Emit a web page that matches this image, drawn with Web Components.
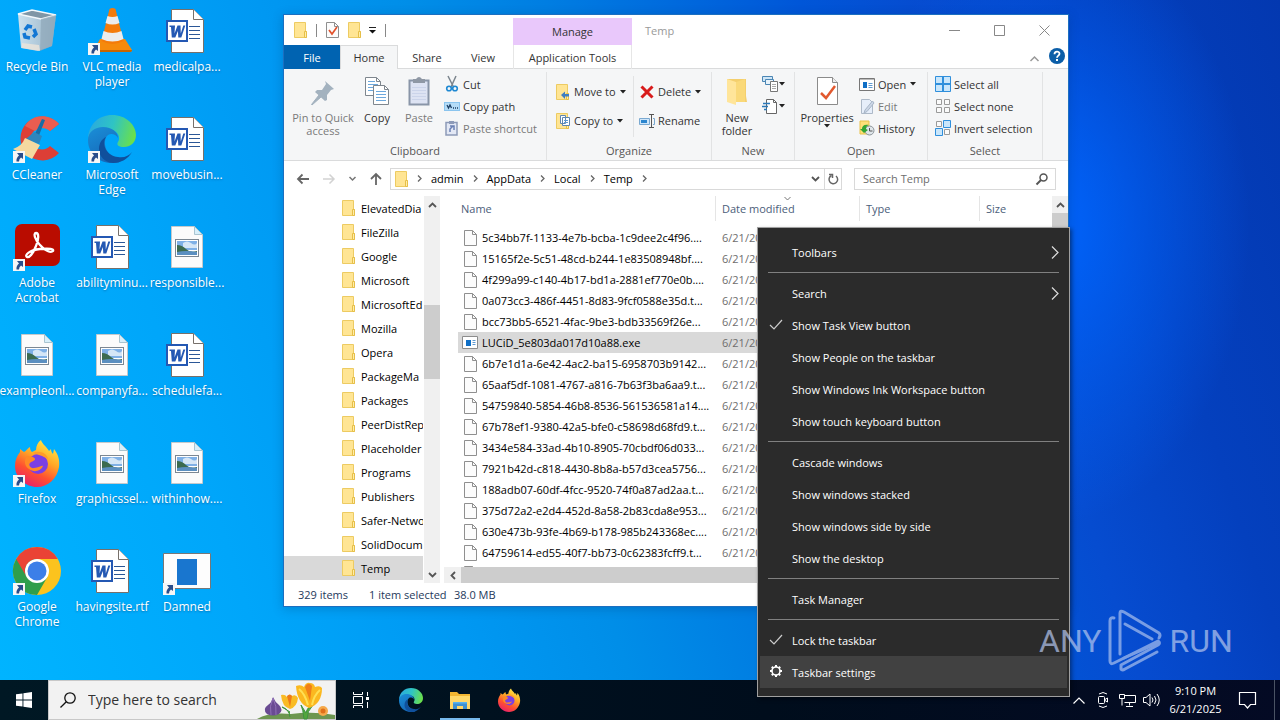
<!DOCTYPE html>
<html lang="en">
<head>
<meta charset="utf-8">
<meta name="viewport" content="width=device-width, initial-scale=1">
<title>Desktop</title>
<style>
  html, body { margin: 0; height: 100%; }
  body { font: 11px/15px "Open Sans", "Noto Sans", sans-serif; color: #000; overflow: hidden; }
</style>
</head>
<body>
<desk-shell></desk-shell>

<script>
const BASE = `
  *, *::before, *::after { box-sizing: border-box; }
  button, input { font: inherit; color: inherit; background: none; border: 0; padding: 0; margin: 0; outline: 0; }
  a { color: inherit; text-decoration: none; }
  button { white-space: nowrap; }
`;

/* Registers an element whose shadow tree comes from a style block and a render function. */
function define(name, css, render) {
  customElements.define(name, class extends HTMLElement {
    connectedCallback() {
      if (this.shadowRoot) return;
      const root = this.attachShadow({ mode: 'open' });
      const tpl = document.createElement('template');
      tpl.innerHTML = `<style>${BASE}${css}</style>${render(this)}`;
      root.append(tpl.content.cloneNode(true));
    }
  });
}

/* ---------- icons: name -> [width, height, markup] ---------- */
const wordDoc = `<path d="M8.500 2.500h22l10 10v33h-32z" fill="#fff" stroke="#77706a"/>
  <path d="M30.500 2.500v10h10" fill="#fff" stroke="#77706a"/>
  <path d="M26 19.500h11M26 23.500h11M26 27.500h11M26 31.500h11" stroke="#2b5797"/>
  <rect x="3" y="13" width="22" height="22" fill="#2458b3"/><rect x="5" y="15" width="18" height="18" fill="#fff"/>
  <path d="M6.500 18.500h5.500l-.5 8 3-8h3l.3 8 2.500-8h2l-4 12h-3l-.4-6.500-2.600 6.500h-3.500l-.8-10.500h-1.500z" fill="#2458b3"/>`;
const picDoc = `<path d="M8.500 3.500h23l8 8v33h-31z" fill="#fbfbfb" stroke="#c4c9cc"/>
  <path d="M31.500 3.500v8h8z" fill="#d8effa" stroke="#a9c4d0"/>
  <rect x="12.500" y="16.500" width="23" height="17" fill="#fff" stroke="#7c8792"/>
  <path d="M14 18h20v9h-20z" fill="#7fb0e6"/><path d="M20 20q4-3 8 0t6 0v5h-14z" fill="#d5e6f6"/>
  <path d="M14 22q5 0 9 4t11 2v4h-20z" fill="#3c6b4f"/><path d="M14 29q9-2 20 0v3h-20z" fill="#5b8fc0"/>`;
const edge = `<defs><linearGradient id="e1" x1="0" y1=".3" x2="1" y2=".5"><stop offset="0" stop-color="#2aa8e0"/><stop offset=".5" stop-color="#2fc4c4"/><stop offset="1" stop-color="#6be04a"/></linearGradient>
  <linearGradient id="e2" x1="0" y1="0" x2=".5" y2="1"><stop offset="0" stop-color="#1a8fd8"/><stop offset="1" stop-color="#1668b8"/></linearGradient></defs>
  <path d="M0 23C1 9 11 0 24 0c14 0 24 10 24 20 0 8-6 12-12 12-5 0-8-2-6-5 3-4 0-12-8-12C12 14 3 18 0 23z" fill="url(#e1)"/>
  <path d="M0 25C0 17 7 12 15 12c9 0 15 5 15 11-2-4-7-5-10-3-5 4-4 15 3 21 3 3 7 5 10 5-2 2-6 2-9 2C10 48 0 38 0 25z" fill="url(#e2)"/>
  <path d="M18 22c-5 8 1 19 12 20 6 1 11-1 14-5-4 7-11 11-19 11C16 47 11 41 11 34c0-6 3-10 7-12z" fill="#10509c"/>`;
const firefox = `<defs><linearGradient id="f1" x1=".8" y1="0" x2=".3" y2="1"><stop offset="0" stop-color="#fff04a"/><stop offset=".4" stop-color="#ffa726"/><stop offset=".7" stop-color="#ff5030"/><stop offset="1" stop-color="#e8206c"/></linearGradient></defs>
  <path d="M28 1c1 4 6 7 8 11l2-2c0 2 1 4 2 5l1-5c4 5 6 11 5 18-2 12-11 20-22 20S2 39 2 27c0-6 2-10 5-14V10l4 3c2-1 4-4 6-5 0 3 1 4 2 5l4-2c0-4 2-8 5-10z" fill="url(#f1)"/>
  <circle cx="25" cy="25" r="10" fill="#7b3fe4"/><path d="M14 17c3 0 8 1 8 3s-3 2-5 4 1 6 4 5c5 0 8-3 9-2-2 5-9 7-14 3-5-3-5-9-2-13z" fill="#ff8a25"/>
  <path d="M20 14c6-3 14 0 15 6l-6-3z" fill="#ff9d28"/>`;
const folder = `<path d="M.5.5h11v9h1v6H.5z" fill="#ffe594" stroke="#edcb62"/><path d="M10.500 9.500h2v6h-2z" fill="#ffedaa" stroke="#e6bf48"/>`;
const caretDown = `<path d="M0 0h6L3 3.500z" fill="#222"/>`;
const page = `<path d="M.5.5h8l4 4v11h-12z" fill="#fcfcfc" stroke="#8f8f8f"/><path d="M8.500.5v4h4" fill="none" stroke="#8f8f8f"/>`;

const ICONS = {
  recycle: [48, 48, `<defs><linearGradient id="r" x1="0" x2="1"><stop offset="0" stop-color="#d6e4ee"/><stop offset="1" stop-color="#9fb4c4"/></linearGradient></defs>
    <path d="M5 7l14-4 24 5-4 31-14 5-17-3z" fill="url(#r)" opacity=".95"/><path d="M5 7l23 5 15-4-24-5z" fill="#7f96a6" stroke="#f2f8fc" stroke-width="1.500"/>
    <path d="M28 12l15-4-4 31-12 5z" fill="#8ea6b8" opacity=".7"/><path d="M9 36l17 2 1 6-18-3z" fill="#eee5da" opacity=".8"/>
    <g fill="none" stroke="#1277d4" stroke-width="3.500"><path d="M12 23l3-4 4 1"/><path d="M21 22l2 5-3 3"/><path d="M17 31l-5-1-1-4"/></g>`],
  vlc: [48, 48, `<path d="M6 43l6-11h25l7 11q0 2-3 2H9q-3 0-3-2z" fill="#f58a0c"/><path d="M6 43h38q0 2-3 2H9q-3 0-3-2z" fill="#c86500"/>
    <path d="M21.500 2q3-2 6 0l8 32q-11 6-22 0z" fill="#f47b0a"/><path d="M19.500 9q5 2 10 0l2 7q-7 3-14 0zM15.500 24q9 4 18 0l2 8q-11 5-22 0z" fill="#ececec"/>`],
  ccleaner: [48, 48, `<path d="M46 9A22 22 0 1 0 46 38L37 31A11 11 0 1 1 37 16z" fill="#dc3f36"/><path d="M46 9C36-2 19-1 12 11l10 5c4-4 10-4 15 0z" fill="#ea5d50"/>
    <path d="M29 4l3 1-7 18-4-2z" fill="#176da6"/><path d="M21 17l8 4-3 8-13-5z" fill="#2e86bd"/><path d="M12 23l15 7-8 14L0 34q9-3 12-11z" fill="#f5d9a0"/>`],
  acrobat: [48, 48, `<rect x="2" y="1" width="45" height="42" rx="7" fill="#b90c00"/>
    <path d="M23 10c3 0 3 6 0 13-3 8-7 12-9 11-3-2 3-7 13-8s14 0 13 2c-2 2-8 0-13-6-5-5-7-12-4-12z" fill="none" stroke="#fff" stroke-width="2.300"/>`],
  chrome: [48, 48, `<circle cx="24" cy="24" r="24" fill="#fcc31e"/>
    <path d="M3.200 12A24 24 0 0 0 24 48l10.400-18L24 24V12z" fill="#2f9e4c"/><path d="M3.200 12A24 24 0 0 1 44.800 12H24A12 12 0 0 0 13.600 30z" fill="#ea4335"/>
    <circle cx="24" cy="24" r="12" fill="#fff"/><circle cx="24" cy="24" r="9.500" fill="#3c7fe8"/>`],
  firefox: [48, 48, firefox], edge: [48, 48, edge], word: [48, 48, wordDoc], picture: [48, 48, picDoc],
  program: [48, 48, `<path d="M.5 6.500h47v35H.5z" fill="#fdfdfd" stroke="#777"/><rect x="14" y="12" width="20" height="26" fill="#1976cf"/>`],
  shortcut: [12, 12, `<path d="M0 0h12v12H0z" fill="#f6f6f6"/><path d="M4 2h6v6L8 6.500Q6 8 6 10.500H3.500Q3 7 6 4.500z" fill="#2a4d8a"/>`],
  folder: [13, 16, folder],
  check: [13, 16, `${page}<path d="M3 8l3 4 5-7" fill="none" stroke="#e2522c" stroke-width="1.700"/>`],
  qat: [7, 7, `<path d="M0 .5h7" stroke="#222"/><path d="M0 3h7L3.500 6.500z" fill="#111"/>`],
  min: [11, 11, `<path d="M0 5.500h11" stroke="#888"/>`],
  max: [11, 11, `<path d="M.5.5h10v10H.5z" fill="none" stroke="#888"/>`],
  close: [11, 11, `<path d="M.5.5l10 10M10.500.5l-10 10" stroke="#888"/>`],
  up: [9, 6, `<path d="M.5 5l4-4 4 4" fill="none" stroke="#999" stroke-width="1.500"/>`],
  upDark: [9, 6, `<path d="M1 5l3.500-3.500L8 5" fill="none" stroke="#555" stroke-width="1.800"/>`],
  downDark: [9, 6, `<path d="M1 1l3.500 3.500L8 1" fill="none" stroke="#555" stroke-width="1.800"/>`],
  downSmall: [7, 5, `<path d="M.5 1l3 3 3-3" fill="none" stroke="#777" stroke-width="1.500"/>`],
  sort: [7, 4, `<path d="M.5 0l3 3 3-3" fill="none" stroke="#777"/>`],
  leftDark: [6, 9, `<path d="M5 1L1.500 4.500 5 8" fill="none" stroke="#555" stroke-width="1.800"/>`],
  crumb: [5, 7, `<path d="M1 .5l3 3-3 3" fill="none" stroke="#666" stroke-width="1.300"/>`],
  back: [12, 10, `<path d="M5.500.5L1 5l4.500 4.500M1 5h11" fill="none" stroke="#666" stroke-width="1.800"/>`],
  forward: [12, 10, `<path d="M6.500.5L11 5 6.500 9.500M11 5H0" fill="none" stroke="#d2d2d2" stroke-width="1.500"/>`],
  upArrow: [12, 12, `<path d="M1 6l5-5 5 5M6 1v11" fill="none" stroke="#666" stroke-width="1.800"/>`],
  refresh: [11, 12, `<path d="M3.500 2.500A4.300 4.300 0 1 0 8 3" fill="none" stroke="#666" stroke-width="1.500"/><path d="M1 1.500h3.500V5" fill="none" stroke="#666" stroke-width="1.500"/>`],
  lens: [12, 12, `<circle cx="7.500" cy="4.500" r="3.500" fill="none" stroke="#555" stroke-width="1.500"/><path d="M5 7L.5 11.500" stroke="#555" stroke-width="2"/>`],
  help: [16, 16, `<circle cx="8" cy="8" r="8" fill="#0b5ea8"/><path d="M5.500 6.200c0-3.400 5-3.400 5-.4 0 1.800-2.500 2-2.500 4" fill="none" stroke="#fff" stroke-width="1.800"/><rect x="7" y="11" width="2" height="2" fill="#fff"/>`],
  caret: [6, 4, caretDown],
  pin: [32, 32, `<path d="M18 5l9 8-3 1-4 5v5l-2 1-10-9 2-2 5 0 4-6z" fill="#a3b2bf"/><path d="M12 19l2 2-9 8-.5-.5z" fill="#a3b2bf" stroke="#a3b2bf"/>`],
  copy: [32, 32, `<g fill="#fff" stroke="#7e868e"><path d="M4.500 1.500h11l4 4v14h-15z"/><path d="M12.500 9.500h11l4 4v15h-15z"/></g><path d="M15.500 1.500v4h4M23.500 9.500v4h4" fill="none" stroke="#7e868e"/>
    <path d="M7 5.500h7M7 8.500h10M7 11.500h5M7 14.500h5M15 15.500h10M15 18.500h10M15 21.500h10M15 24.500h10" stroke="#6da8dd"/>`],
  paste: [32, 32, `<path d="M6.500 4.500h19v24h-19z" fill="#dde3f3" stroke="#8995a8" stroke-width="2"/><path d="M10 3h3q3-4 6 0h3v4H10z" fill="#8f98a5"/><path d="M9 11.500h14M9 14.500h14M9 17.500h14M9 20.500h14M9 23.500h14" stroke="#cbd4ea"/>`],
  cut: [16, 16, `<path d="M4 0l5.500 11M12 0L7 11" stroke="#7b858d" stroke-width="1.500"/><circle cx="5" cy="12.500" r="2.300" fill="none" stroke="#1e88d2" stroke-width="1.600"/><circle cx="11" cy="12.500" r="2.300" fill="none" stroke="#1e88d2" stroke-width="1.600"/>`],
  copyPath: [16, 16, `<rect x=".5" y="4.500" width="15" height="8" fill="#b5dcf7" stroke="#8ac4ee"/><path d="M3 7l1.500 3L6 7l1.500 3" fill="none" stroke="#1c3e63" stroke-width="1.300"/><path d="M9 10h1M11 10h1M13 10h1" stroke="#1c3e63" stroke-width="1.300"/>`],
  pasteLink: [16, 16, `<path d="M2 2.500h11v12.500H2z" fill="#e3e8f5" stroke="#8d9ab8" stroke-width="1.500"/><path d="M5 1h5v3H5z" fill="#8d9ab8"/><path d="M6 12V9l3-3M6 6h4v4" fill="none" stroke="#6b80b4" stroke-width="1.500"/>`],
  moveTo: [14, 16, `${folder}<path d="M13 10H9V7.500L5 11l4 4v-2.500h4z" fill="#3f7ec2"/>`],
  copyTo: [14, 16, `${folder}<path d="M4.500 2.500h5v8h-5zM6.500 4.500h7v8h-7z" fill="#fff" stroke="#5f86b0"/><path d="M8 7.500h4M8 9.500h4" stroke="#5f9ad2"/>`],
  del: [14, 14, `<path d="M1.500 1.500l11 11M12.500 1.500l-11 11" stroke="#d81b1b" stroke-width="3"/>`],
  rename: [16, 16, `<path d="M.5 5.500h10v6H.5z" fill="#cfe6fa" stroke="#7aa9d1"/><path d="M2 7h6v3H2z" fill="#2c86cf"/><path d="M12.500 1v14M10 1.500h5M10 14.500h5" stroke="#555" /><path d="M14 5.500h1.500v6H14" fill="none" stroke="#7aa9d1"/>`],
  newFolder: [32, 32, `<path d="M6 3h19v17l1 6H6z" fill="#f4cf6d"/><path d="M6 3l9 3v23l-9-3z" fill="#ffe59a"/><path d="M15 6l9-3v23h-9z" fill="#fad979"/>`],
  newItem: [24, 16, `<path d="M.5.5h10v5H.5z" fill="#cfe6f7" stroke="#4b86b4"/><path d="M3.500 3.500h8v5h-8z" fill="#e8f3fb" stroke="#4b86b4"/><path d="M8.500 5.500h7v10h-7z" fill="#fff" stroke="#777"/><path d="M10 8.500h4M10 10.500h4M10 12.500h4" stroke="#aaa"/><g transform="translate(17 6)">${caretDown}</g>`],
  easy: [24, 16, `<path d="M4.500 1.500h7l3 3v11h-10z" fill="#fff" stroke="#666"/><path d="M11.500 1.500v3h3" fill="none" stroke="#666"/><path d="M1 5.500h7M0 8.500h6M2 11.500h3" stroke="#2b79b9" stroke-width="1.300"/><g transform="translate(17 6)">${caretDown}</g>`],
  props: [32, 32, `<path d="M6.500 1.500h15l5 5v22h-20z" fill="#fff" stroke="#8b8b8b"/><path d="M21.500 1.500v5h5" fill="#eee" stroke="#8b8b8b"/><path d="M10 17l5 5 9-12" fill="none" stroke="#e2592f" stroke-width="2.500"/>`],
  open: [16, 13, `<path d="M.5.5h15v12H.5z" fill="#fff" stroke="#777"/><path d="M1 1.500h14" stroke="#bbb"/><rect x="4" y="4" width="4" height="6" fill="#0f6fc6"/><path d="M9.500 5.500h4M9.500 7.500h4M9.500 9.500h4" stroke="#5f9ad2"/>`],
  edit: [16, 16, `<path d="M2.500 1.500h8l3 3v11h-11z" fill="#e6eefa" stroke="#adb9c8"/><path d="M13.500 3L6 12l-1 3 3-1.500 7-8.500z" fill="#cbd6e6" stroke="#a8b6c8"/>`],
  history: [16, 16, `<path d="M1 1h9v13H1z" fill="#ffe079" stroke="#e8c24b"/><circle cx="10.500" cy="10.500" r="4.500" fill="#dfe6ea" stroke="#8a9298"/><path d="M10.500 8v3h3" fill="none" stroke="#555"/><path d="M1 9l4 4 4-3-2-1c0-3 2-4 3-4-5-1-7 1-7 4z" fill="#35a535"/>`],
  selAll: [16, 16, `<path d="M.5.5h15v15H.5z" fill="#c9e6fb" stroke="#2f8fdc"/><path d="M8 0v16M0 8h16" stroke="#2f8fdc" stroke-width="2"/>`],
  selNone: [16, 16, `<g fill="#fbfbfb" stroke="#9a9a9a"><path d="M1.500 1.500h5v5h-5zM9.500 1.500h5v5h-5zM1.500 9.500h5v5h-5zM9.500 9.500h5v5h-5z"/></g>`],
  selInv: [16, 16, `<g fill="#fbfbfb" stroke="#9a9a9a"><path d="M1.500 1.500h5v5h-5zM9.500 9.500h5v5h-5z"/></g><g fill="#c9e6fb" stroke="#2f8fdc"><path d="M8.500.5h7v7h-7zM.5 8.500h7v7h-7z"/></g>`],
  file: [13, 16, page],
  exe: [16, 13, `<path d="M.5.5h15v12H.5z" fill="#fff" stroke="#8c8c8c"/><rect x="4" y="4" width="5" height="6" fill="#0f6fc6"/><path d="M10.500 4.500h3M10.500 6.500h3M10.500 8.500h3" stroke="#5f9ad2"/>`],
  tick: [16, 16, `<path d="M2 9l4 4 8-9" fill="none" stroke="#ccc" stroke-width="1.200"/>`],
  gear: [16, 16, `<g stroke="#fff" fill="none"><circle cx="8" cy="8" r="4" stroke-width="1.600"/><path d="M8 2v2M8 12v2M2 8h2M12 8h2M3.800 3.800l1.400 1.400M10.800 10.800l1.400 1.400M12.200 3.800l-1.400 1.400M3.800 12.200l1.400-1.400" stroke-width="2"/></g>`],
  next: [8, 13, `<path d="M1 .5l6 6-6 6" fill="none" stroke="#ddd" stroke-width="1.200"/>`],
  start: [16, 16, `<path d="M0 2.300L6.500 1.400v6.200H0zM7.400 1.300L16 0v7.600H7.400zM0 8.400h6.500v6.200L0 13.700zM7.400 8.400H16V16l-8.600-1.300z" fill="#fff"/>`],
  search: [16, 16, `<circle cx="10" cy="6" r="5.200" fill="none" stroke="#111" stroke-width="1.300"/><path d="M6.300 9.700L.5 15.500" stroke="#111" stroke-width="1.300"/>`],
  flowers: [78, 38, `<path d="M0 38q12-7 34-5 22-3 44 1v4z" fill="#6d9650"/>
    <path d="M10 33q-5-5 1-9 4-3 5-8 2 5 6 8 5 5 0 9-6 3-12 0z" fill="#6a4b93"/><path d="M16 17q-4 8-2 17M16 17q4 8 3 17" fill="none" stroke="#8f70b5"/>
    <path d="M33 36q-1-8-8-10l8 5M47 38q-1-10-3-14l5 8q1-6 7-8-6 6-6 14z" fill="#53a63c" stroke="#3e9440"/>
    <path d="M24 14q4-1 6 2 2-4 5-1 4-2 6 2-1 9-8 11-8-2-9-14z" fill="#f9bb25"/><path d="M30 15q3-3 5 0l-2 11z" fill="#ee7a18"/>
    <path d="M39 5q5-2 8 1 2-5 6-4 4 0 5 4 5-2 7 1 0 16-13 20-12-5-13-22z" fill="#fbb81f"/><path d="M48 6q3-6 7-1l-2 15z" fill="#f07f17"/><path d="M42 8q6 5 9 16M63 9q-6 5-8 15" stroke="#ffe054" fill="none" stroke-width="2"/>
    <circle cx="66" cy="30" r="5" fill="#f5a94a"/><circle cx="66" cy="30" r="2.500" fill="#e0701a"/>`],
  taskview: [18, 16, `<g stroke="#fff" fill="none"><path d="M1.500 0v2.500h9V0M1.500 16v-2.500h9V16M1.500 4.500h9v7h-9zM15.500 0v4M15.500 10v6"/><rect x="14" y="5" width="3" height="3" fill="#fff" stroke="none"/></g>`],
  explorer: [22, 20, `<path d="M1 2h7l2 2h11v15H1z" fill="#f2b632"/><path d="M1 6h20v13H1z" fill="#ffd869"/><path d="M4 19v-7h14v7h-4v-3H8v3z" fill="#3e91d1"/><path d="M4 12h14v1.500H4z" fill="#56b2ef"/>`],
  trayUp: [12, 7, `<path d="M.5 6.500l5.500-5.500 5.500 5.500" fill="none" stroke="#fff" stroke-width="1.200"/>`],
  camera: [12, 16, `<g fill="none" stroke="#fff"><rect x="1.500" y="4.500" width="6" height="7" rx="1"/><path d="M8 7.500l2.500-1.500v4L8 8.500M2 2Q6-1 10 2M2 14q4 3 8 0"/></g>`],
  network: [17, 14, `<g fill="none" stroke="#fff"><path d="M5.500 2.500h11v7h-11M10.500 9.500v3M7 13.500h7M.5 1.500h5v4h-5zM3 5.500v7"/></g>`],
  sound: [17, 14, `<g fill="none" stroke="#fff"><path d="M.5 4.500h2.500l4-3.500v12L3 9.500H.5zM9 4.500q2 2.500 0 5M11.500 3q3 4 0 8M14 1q4.500 6 0 12"/></g>`],
  note: [17, 17, `<path d="M.5.500h16v12h-5l-3 3.500-3-3.500h-5z" fill="none" stroke="#fff" stroke-width="1.200"/>`],
  mark: [54, 62, `<g fill="none" stroke="#a9c0ee" stroke-width="3" stroke-linejoin="round" stroke-linecap="round"><path d="M6 8Q2 7 2 11v40q0 4 4 2l44-22q3 2 0 4L13 55v4q1 2 4 0l32-17"/><path d="M12 44V3q0-3 4-1l35 21q2 2 0 5M16 48L50 33M17 14l27 15"/></g>`]
};

define('ui-icon', `:host { display: inline-flex; flex: none; } svg { display: block; overflow: visible; }`, el => {
  const [w, h, body] = ICONS[el.getAttribute('name')];
  const s = Number(el.getAttribute('size')) || w;
  return `<svg width="${s}" height="${Math.round(h * s / w)}" viewBox="0 0 ${w} ${h}" aria-hidden="true">${body}</svg>`;
});
const icon = (name, size) => `<ui-icon name="${name}"${size ? ` size="${size}"` : ''}></ui-icon>`;

/* ---------- desktop shortcut ---------- */
define('desk-icon', `
  :host { display: block; }
  a { display: flex; flex-direction: column; align-items: center; gap: 4px; width: 74px; text-align: center; color: #fff; text-shadow: 0 1px 2px #0048808c; }
  .art { position: relative; display: flex; }
  .badge { position: absolute; left: 0; bottom: 0; display: flex; }
  .t { white-space: nowrap; }
`, el => `<a href="#">
  <span class="art">${icon(el.getAttribute('icon'))}${el.hasAttribute('link') ? `<span class="badge">${icon('shortcut')}</span>` : ''}</span>
  <span class="t"><slot></slot></span></a>`);

define('desk-icons', `
  :host { display: grid; grid-auto-flow: column; grid-template-rows: repeat(6, 108px); grid-auto-columns: 75px; width: max-content; padding-top: 7px; font-size: 12px; }
`, () => [
  ['recycle', 'Recycle Bin'], ['ccleaner', 'CCleaner', 1], ['acrobat', 'Adobe<br>Acrobat', 1], ['picture', 'exampleonl...'], ['firefox', 'Firefox', 1], ['chrome', 'Google<br>Chrome', 1],
  ['vlc', 'VLC media<br>player', 1], ['edge', 'Microsoft<br>Edge', 1], ['word', 'abilityminu...'], ['picture', 'companyfa...'], ['picture', 'graphicssel...'], ['word', 'havingsite.rtf'],
  ['word', 'medicalpa...'], ['word', 'movebusin...'], ['picture', 'responsible...'], ['word', 'schedulefa...'], ['picture', 'withinhow....'], ['program', 'Damned', 1]
].map(([i, t, l]) => `<desk-icon icon="${i}"${l ? ' link' : ''}>${t}</desk-icon>`).join(''));

/* ---------- window chrome ---------- */
define('window-header', `
  :host { display: grid; grid-template-columns: 229px 119px 1fr auto; grid-template-rows: 30px 24px; background: #fff; border-bottom: 1px solid #dadbdc; height: 54px; color: #333; }
  .quick { display: flex; align-items: center; gap: 9px; padding-left: 10px; }
  .quick i { width: 1px; height: 13px; background: #888; }
  .quick .more { margin-left: -1px; display: flex; }
  .manage { margin-top: 3px; background: #e9c8fb; display: grid; place-items: center; }
  .title { padding: 8px 13px; color: #999; }
  .ctl { display: flex; padding-right: 1px; }
  .ctl button { width: 45px; display: grid; place-items: center; }
  .tabs { display: flex; }
  .tabs button, .app { display: grid; place-items: center; height: 24px; }
  .file { width: 56px; background: #0063b1; color: #fff; }
  .home { width: 58px; background: #f5f6f7; border: 1px solid #dadbdc; border-bottom: 0; }
  .share { width: 58px; } .view { width: 54px; }
  .app { border: 1px solid #e6e6e6; border-width: 0 1px; width: 100%; }
  .tools { grid-column: 3 / 5; display: flex; justify-content: flex-end; align-items: center; gap: 10px; padding-right: 3px; }
`, () => `
  <div class="quick">${icon('folder')}<i></i>${icon('check')}${icon('folder')}<span class="more">${icon('qat')}</span><i></i></div>
  <div class="manage">Manage</div>
  <div class="title">Temp</div>
  <div class="ctl"><button aria-label="Minimize">${icon('min')}</button><button aria-label="Maximize">${icon('max')}</button><button aria-label="Close">${icon('close')}</button></div>
  <div class="tabs"><button class="file">File</button><button class="home">Home</button><button class="share">Share</button><button class="view">View</button></div>
  <button class="app">Application Tools</button>
  <div class="tools"><button aria-label="Collapse the ribbon">${icon('up')}</button><button aria-label="Help">${icon('help')}</button></div>`);

define('ribbon-group', `
  :host { display: grid; grid-template-rows: 1fr 17px; border-right: 1px solid #e2e3e4; color: #333; }
  .items { display: flex; min-width: 0; }
  .label { text-align: center; color: #555; }
`, el => `<div class="items"><slot></slot></div><div class="label">${el.getAttribute('label')}</div>`);

define('big-button', `
  :host { display: block; }
  button { display: flex; flex-direction: column; align-items: center; width: 100%; padding-top: 4px; line-height: 13px; }
  .t { width: 0; display: flex; justify-content: center; text-align: center; padding-top: 3px; }
  :host([off]) { color: #7a7a7a; }
`, el => `<button>${icon(el.getAttribute('icon'))}<span class="t"><span>${el.getAttribute('label').replace('|', '<br>')}</span></span>${el.hasAttribute('menu') ? icon('caret') : ''}</button>`);

define('small-button', `
  :host { display: block; }
  button { display: flex; align-items: center; gap: 3px; height: 100%; }
  .i { width: 16px; display: flex; justify-content: center; }
  .c { display: flex; padding-left: 1px; }
  :host([off]) { color: #7a7a7a; }
`, el => `<button><span class="i">${icon(el.getAttribute('icon'))}</span><span>${el.getAttribute('label')}</span>${el.hasAttribute('menu') ? `<span class="c">${icon('caret')}</span>` : ''}</button>`);

define('ribbon-bar', `
  :host { display: grid; grid-template-columns: 263px 165px 83px 133px 115px 1fr; height: 92px; background: #f5f6f7; border-bottom: 1px solid #dadbdc; padding: 3px 0 0; }
  .col { display: grid; grid-auto-rows: 22px; align-content: start; padding-top: 1px; }
  .wide { grid-auto-rows: 29px; padding-top: 5px; }
  .line { border-left: 1px solid #e2e3e4; margin: 4px 0 6px; padding-top: 1px; }
  .icons button { display: flex; align-items: center; }
`, () => `
  <ribbon-group label="Clipboard">
    <big-button style="width:76px;padding-left:2px" icon="pin" label="Pin to Quick|access" off></big-button>
    <big-button style="width:34px" icon="copy" label="Copy"></big-button>
    <big-button style="width:50px" icon="paste" label="Paste" off></big-button>
    <div class="col"><small-button icon="cut" label="Cut"></small-button><small-button icon="copyPath" label="Copy path"></small-button><small-button icon="pasteLink" label="Paste shortcut" off></small-button></div>
  </ribbon-group>
  <ribbon-group label="Organize">
    <div class="col wide" style="width:86px;padding-left:8px"><small-button icon="moveTo" label="Move to" menu></small-button><small-button icon="copyTo" label="Copy to" menu></small-button></div>
    <div class="col wide line" style="padding-left:5px"><small-button icon="del" label="Delete" menu></small-button><small-button icon="rename" label="Rename"></small-button></div>
  </ribbon-group>
  <ribbon-group label="New">
    <big-button style="width:50px" icon="newFolder" label="New|folder"></big-button>
    <div class="col icons"><button aria-label="New item">${icon('newItem')}</button><button aria-label="Easy access">${icon('easy')}</button></div>
  </ribbon-group>
  <ribbon-group label="Open">
    <big-button style="width:64px" icon="props" label="Properties" menu></big-button>
    <div class="col"><small-button icon="open" label="Open" menu></small-button><small-button icon="edit" label="Edit" off></small-button><small-button icon="history" label="History"></small-button></div>
  </ribbon-group>
  <ribbon-group label="Select">
    <div class="col" style="padding-left:7px"><small-button icon="selAll" label="Select all"></small-button><small-button icon="selNone" label="Select none"></small-button><small-button icon="selInv" label="Invert selection"></small-button></div>
  </ribbon-group>`);

define('address-bar', `
  :host { display: grid; grid-template-columns: 106px 1fr 202px; align-items: center; height: 35px; padding-right: 12px; background: #fff; }
  .nav { display: flex; align-items: center; justify-content: space-between; padding: 0 8px 0 13px; }
  .nav button { display: flex; }
  .path { display: flex; align-items: center; gap: 9px; height: 22px; border: 1px solid #d9d9d9; margin-right: 12px; padding-left: 4px; min-width: 0; }
  .end { margin-left: auto; display: flex; height: 100%; }
  .end button { display: grid; place-items: center; width: 17px; }
  .end button + button { border-left: 1px solid #d9d9d9; }
  .find { display: flex; align-items: center; height: 22px; border: 1px solid #d9d9d9; padding: 0 7px 0 8px; }
  .find input { flex: 1; min-width: 0; } .find input::placeholder { color: #6d6d6d; opacity: 1; }
`, () => `
  <div class="nav"><button aria-label="Back">${icon('back')}</button><button aria-label="Forward">${icon('forward')}</button><button aria-label="Recent locations">${icon('downSmall')}</button><button aria-label="Up">${icon('upArrow')}</button></div>
  <div class="path">${icon('folder')}${icon('crumb')}<a href="#">admin</a>${icon('crumb')}<a href="#">AppData</a>${icon('crumb')}<a href="#">Local</a>${icon('crumb')}<a href="#">Temp</a>${icon('crumb')}
    <span class="end"><button aria-label="Previous locations">${icon('downDark')}</button><button aria-label="Refresh">${icon('refresh')}</button></span></div>
  <label class="find"><input type="text" placeholder="Search Temp" aria-label="Search Temp">${icon('lens')}</label>`);

/* ---------- panes ---------- */
define('folder-tree', `
  :host { display: grid; grid-template-columns: 140px 16px; grid-template-rows: minmax(0, 1fr); min-height: 0; }
  nav { overflow: hidden; }
  a { display: flex; align-items: center; gap: 6px; height: 24px; padding-left: 58px; white-space: nowrap; width: 139px; overflow: hidden; }
  a[aria-current] { background: #d9d9d9; }
  .bar { background: #f0f0f0; display: grid; grid-template-rows: 17px 92px 74px 1fr 17px; justify-items: center; align-items: center; }
  .thumb { grid-row: 3; width: 16px; height: 74px; background: #cdcdcd; } .dn { grid-row: 5; display: flex; } .up { display: flex; }
`, () => `<nav aria-label="Folders">${['ElevatedDia', 'FileZilla', 'Google', 'Microsoft', 'MicrosoftEd', 'Mozilla', 'Opera', 'PackageMa', 'Packages', 'PeerDistRep', 'Placeholder', 'Programs', 'Publishers', 'Safer-Netwo', 'SolidDocum', 'Temp']
  .map(t => `<a href="#"${t === 'Temp' ? ' aria-current="true"' : ''}>${icon('folder')}<span>${t}</span></a>`).join('')}</nav>
  <div class="bar"><span class="up">${icon('upDark')}</span><span class="thumb"></span><span class="dn">${icon('downDark')}</span></div>`);

define('file-list', `
  :host { display: grid; grid-template-columns: minmax(0, 1fr) 16px; grid-template-rows: minmax(0, 1fr) 16px; min-width: 0; min-height: 0; padding-left: 4px; }
  .rows { overflow: hidden; padding-left: 14px; }
  table { width: 100%; table-layout: fixed; border-collapse: collapse; }
  th { height: 31px; padding: 0 0 6px; text-align: left; font-weight: 400; color: #4c607a; vertical-align: top; }
  th span { display: flex; position: relative; height: 25px; align-items: center; border-right: 1px solid #e5e5e5; padding-left: 6px; }
  th:first-child span { padding-left: 3px; }
  th:last-child span { border: 0; }
  .sort { position: absolute; left: 68px; top: 1px; display: flex; }
  td { height: 21px; padding: 0; white-space: nowrap; overflow: hidden; color: #6d6d6d; }
  td:nth-child(2) { padding-left: 6px; }
  td:first-child { color: #000; }
  td div { display: flex; align-items: center; gap: 4px; padding-left: 4px; }
  .i { flex: none; width: 16px; display: flex; justify-content: center; }
  tr.on td { background: #d9d9d9; }
  .v { background: #f0f0f0; display: grid; grid-template-rows: 17px 120px; justify-items: center; align-items: center; align-content: start; }
  .v b { width: 16px; height: 120px; background: #cdcdcd; }
  .h { grid-column: 1 / 3; background: #f0f0f0; display: grid; grid-template-columns: 17px 1fr 120px; align-items: center; justify-items: center; }
  .h b { width: 100%; height: 16px; background: #cdcdcd; }
`, () => `<div class="rows"><table><colgroup><col style="width:258px"><col style="width:144px"><col style="width:120px"><col></colgroup>
  <thead><tr><th><span>Name</span></th><th><span>Date modified<i class="sort">${icon('sort')}</i></span></th><th><span>Type</span></th><th><span>Size</span></th></tr></thead><tbody>
  ${['5c34bb7f-1133-4e7b-bcba-1c9dee2c4f96....', '15165f2e-5c51-48cd-b244-1e83508948bf....', '4f299a99-c140-4b17-bd1a-2881ef770e0b....', '0a073cc3-486f-4451-8d83-9fcf0588e35d.t...', 'bcc73bb5-6521-4fac-9be3-bdb33569f26e...', 'LUCiD_5e803da017d10a88.exe', '6b7e1d1a-6e42-4ac2-ba15-6958703b9142...', '65aaf5df-1081-4767-a816-7b63f3ba6aa9.t...', '54759840-5854-46b8-8536-561536581a14....', '67b78ef1-9380-42a5-bfe0-c58698d68fd9.t...', '3434e584-33ad-4b10-8905-70cbdf06d033...', '7921b42d-c818-4430-8b8a-b57d3cea5756...', '188adb07-60df-4fcc-9520-74f0a87ad2aa.t...', '375d72a2-e2d4-452d-8a58-2b83cda8e953...', '630e473b-93fe-4b69-b178-985b243368ec....', '64759614-ed55-40f7-bb73-0c62383fcff9.t...', '']
    .map(t => { const exe = t.endsWith('exe'); return `<tr${exe ? ' class="on"' : ''}><td><div><span class="i">${icon(exe ? 'exe' : 'file')}</span><span>${t}</span></div></td><td>${t ? '6/21/2025' : ''}</td><td></td><td></td></tr>`; }).join('')}
  </tbody></table></div>
  <div class="v">${icon('upDark')}<b></b></div>
  <div class="h">${icon('leftDark')}<b></b></div>`);

define('explorer-window', `
  :host { display: grid; grid-template-rows: 54px 92px 35px minmax(0, 1fr) 23px; background: #fff; border: 1px solid #1c6fc0; box-shadow: 0 2px 10px #00306040; }
  .body { display: grid; grid-template-columns: 156px minmax(0, 1fr); grid-template-rows: minmax(0, 1fr); min-height: 0; }
  .status { display: flex; align-items: center; padding-left: 14px; color: #1e395b; }
  .status span:nth-child(1) { width: 71px; } .status span:nth-child(2) { width: 85px; }
`, () => `<window-header></window-header><ribbon-bar></ribbon-bar><address-bar></address-bar>
  <div class="body"><folder-tree></folder-tree><file-list></file-list></div>
  <div class="status"><span>329 items</span><span>1 item selected</span><span>38.0 MB</span></div>`);

/* ---------- taskbar menu ---------- */
define('menu-item', `
  :host { display: block; color: #fff; padding: 0 2px; }
  button { display: grid; grid-template-columns: 16px 1fr 8px; column-gap: 8px; align-items: center; width: 100%; height: 32px; text-align: left; padding: 0 8px; }
  :host([active]) button { background: #414141; }
`, el => `<button role="menuitem"><span>${el.hasAttribute('icon') ? icon(el.getAttribute('icon')) : ''}</span><span><slot></slot></span>${el.hasAttribute('more') ? icon('next') : ''}</button>`);

define('context-menu', `
  :host { display: block; background: #2b2b2b; border: 1px solid #a0a0a0; padding: 8px 0; box-shadow: 2px 2px 4px #0006; }
  hr { border: 0; height: 1px; margin: 4px 10px; background: #808080; }
`, () => `<div role="menu"><menu-item more>Toolbars</menu-item><hr><menu-item more>Search</menu-item><menu-item icon="tick">Show Task View button</menu-item><menu-item>Show People on the taskbar</menu-item><menu-item>Show Windows Ink Workspace button</menu-item><menu-item>Show touch keyboard button</menu-item><hr>
  <menu-item>Cascade windows</menu-item><menu-item>Show windows stacked</menu-item><menu-item>Show windows side by side</menu-item><menu-item>Show the desktop</menu-item><hr><menu-item>Task Manager</menu-item><hr><menu-item icon="tick">Lock the taskbar</menu-item><menu-item icon="gear" active>Taskbar settings</menu-item></div>`);

define('any-run', `
  :host { display: flex; align-items: center; gap: 7px; opacity: .7; color: #b4c6ee; font: 400 32px/48px Roboto, sans-serif; pointer-events: none; }
`, () => `<span>ANY</span>${icon('mark')}<span>RUN</span>`);

/* ---------- taskbar ---------- */
define('task-bar', `
  :host { display: flex; height: 40px; background: linear-gradient(90deg, #001824, #000d1c 60%, #040a24); color: #fff; }
  button { display: grid; place-items: center; }
  .start { width: 48px; }
  .find { display: flex; align-items: center; width: 288px; background: #f2f2f2; border: 1px solid #c8c8c8; padding-left: 11px; color: #333; font-size: 14px; line-height: 20px; }
  .find input { flex: 1; min-width: 0; padding-left: 12px; } .find input::placeholder { color: #333; opacity: 1; }
  .apps { display: grid; grid-template-columns: 50px 50px 48px 50px; }
  .live { position: relative; }
  .live::after { content: ""; position: absolute; left: 4px; right: 4px; bottom: 0; height: 2px; background: #76b9ed; }
  .tray { margin-left: auto; display: flex; align-items: center; }
  .tray button { width: 24px; height: 40px; }
  .tray .clock { width: 65px; text-align: center; line-height: 18px; display: block; }
  .tray .note { width: 38px; }
  .tray i { width: 1px; height: 40px; background: #4a5364; margin: 0 5px 0 8px; }
`, () => `
  <button class="start" aria-label="Start">${icon('start')}</button>
  <label class="find">${icon('search')}<input type="text" placeholder="Type here to search" aria-label="Type here to search">${icon('flowers')}</label>
  <div class="apps"><button aria-label="Task View">${icon('taskview')}</button><button aria-label="Edge">${icon('edge', 24)}</button><button class="live" aria-label="File Explorer">${icon('explorer')}</button><button aria-label="Firefox">${icon('firefox', 24)}</button></div>
  <div class="tray"><button aria-label="Hidden icons">${icon('trayUp')}</button><button aria-label="Camera">${icon('camera')}</button><button aria-label="Network">${icon('network')}</button><button aria-label="Volume">${icon('sound')}</button>
    <button class="clock">9:10 PM<br>6/21/2025</button><button class="note" aria-label="Notifications">${icon('note')}</button><i></i></div>`);

define('desk-shell', `
  :host { display: grid; grid-template-rows: 1fr auto; height: 100vh; position: relative; overflow: hidden; }
  .desktop { min-height: 0; background:
      radial-gradient(ellipse 200px 300px at 82% 33%, #0064fc 0%, #0064fc00 100%),
      linear-gradient(72deg, #00b4ff 0%, #00a6fa 18%, #0098f2 32%, #008ee8 42%, #007ee2 51%, #0056d8 68%, #064cd0 76%, #0440be 86%, #0338b0 100%); }
  explorer-window { position: absolute; left: 283px; top: 14px; width: 786px; height: 593px; }
  context-menu { position: absolute; left: 757px; top: 227px; width: 313px; }
  any-run { position: absolute; left: 1039px; top: 610px; }
`, () => `<main class="desktop"><desk-icons></desk-icons><explorer-window></explorer-window></main><task-bar></task-bar><context-menu></context-menu><any-run></any-run>`);
</script>
</body>
</html>
